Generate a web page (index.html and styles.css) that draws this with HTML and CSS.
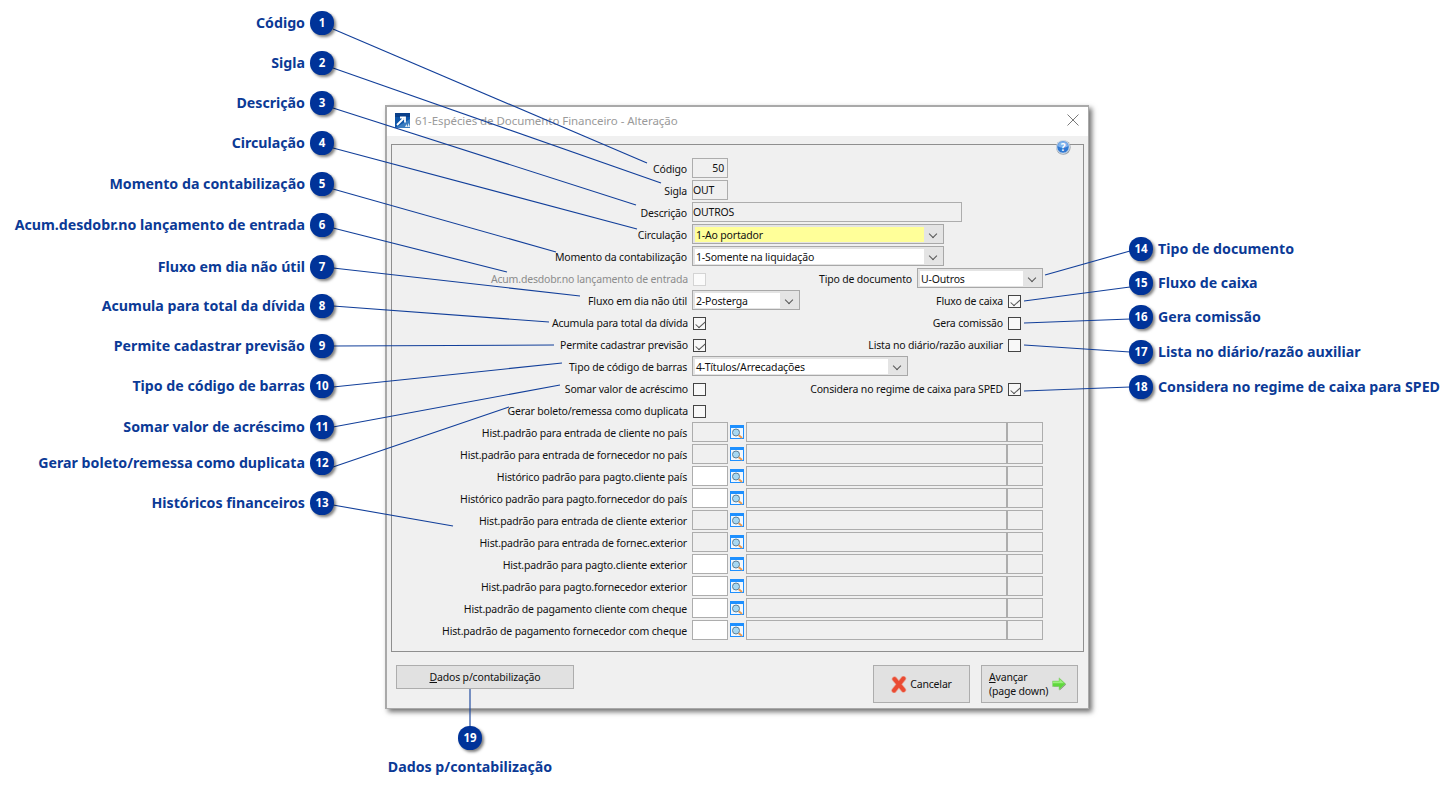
FILE: index.html
```html
<!DOCTYPE html>
<html lang="pt">
<head>
<meta charset="utf-8">
<title>Espécies de Documento Financeiro</title>
<link rel="stylesheet" href="styles.css">
</head>
<body>
<svg width="0" height="0" class="defs">
  <symbol id="lupa" viewBox="0 0 14 14">
    <rect x="0.5" y="0.5" width="13" height="13" fill="#f2f8fd" stroke="#1e90ff"/>
    <rect x="1" y="1" width="12" height="2" fill="#1e90ff"/>
    <circle cx="6" cy="7.500" r="3.500" fill="#a6d8f2" stroke="#5f7f96"/>
    <path d="M8.800 10.300l3.200 2.700" stroke="#ee9a4e" stroke-width="2"/>
  </symbol>
</svg>
<div class="page">
  <main class="dialog">
    <header class="titlebar">
      <svg class="appicon" width="15" height="15" viewBox="0 0 15 15">
        <rect width="15" height="15" fill="#0f55a8"/>
        <rect width="15" height="4" fill="#0a3f8a"/>
        <path d="M0 15L15 6v9z" fill="#3a7cc0"/>
        <path d="M2 12l6.500-6.500M5 4.500h5v5" fill="none" stroke="#fff" stroke-width="1.800"/>
        <path d="M10 14l1.500-3 1 3zM12.500 14l1-4 1.500 4z" fill="#dbe7f4"/>
      </svg>
      <span class="titletext">61-Espécies de Documento Financeiro - Alteração</span>
      <svg class="close" width="12" height="12" viewBox="0 0 12 12"><path d="M.5.500l11 11M11.500.500l-11 11" stroke="#7a7a7a" fill="none"/></svg>
    </header>
    <section class="frame">
      <svg class="help" width="16" height="16" viewBox="0 0 16 16">
        <circle cx="8.300" cy="8.500" r="7.300" fill="#9aa3ad"/>
        <circle cx="8" cy="8" r="6.300" fill="#2f78d2" stroke="#e4ebf3"/>
        <path d="M3 6.500a5 4 0 0 1 10 0a5 2 0 0 1-10 0" fill="#7fb2ec"/>
        <text x="8" y="11.500" class="helpq">?</text>
      </svg>

      <div class="row"><label class="lbl">Código</label><span class="field w-code num">50</span></div>
      <div class="row"><label class="lbl">Sigla</label><span class="field w-sigla">OUT</span></div>
      <div class="row"><label class="lbl">Descrição</label><span class="field w-desc">OUTROS</span></div>
      <div class="row"><label class="lbl">Circulação</label><span class="select w-long"><span class="val yellow">1-Ao portador</span><span class="arrow"></span></span></div>
      <div class="row"><label class="lbl">Momento da contabilização</label><span class="select w-long"><span class="val">1-Somente na liquidação</span><span class="arrow"></span></span></div>
      <div class="row"><label class="lbl muted">Acum.desdobr.no lançamento de entrada</label><span class="check off"></span>
        <div class="right"><label class="rlbl">Tipo de documento</label><span class="select w-tipo"><span class="val">U-Outros</span><span class="arrow"></span></span></div></div>
      <div class="row"><label class="lbl">Fluxo em dia não útil</label><span class="select w-fluxo"><span class="val">2-Posterga</span><span class="arrow"></span></span>
        <div class="right rc"><label class="rlbl">Fluxo de caixa</label><span class="check on"></span></div></div>
      <div class="row"><label class="lbl">Acumula para total da dívida</label><span class="check on"></span>
        <div class="right rc"><label class="rlbl">Gera comissão</label><span class="check"></span></div></div>
      <div class="row"><label class="lbl">Permite cadastrar previsão</label><span class="check on"></span>
        <div class="right rc"><label class="rlbl">Lista no diário/razão auxiliar</label><span class="check"></span></div></div>
      <div class="row"><label class="lbl">Tipo de código de barras</label><span class="select w-barras"><span class="val">4-Títulos/Arrecadações</span><span class="arrow"></span></span></div>
      <div class="row"><label class="lbl">Somar valor de acréscimo</label><span class="check"></span>
        <div class="right rc"><label class="rlbl">Considera no regime de caixa para SPED</label><span class="check on"></span></div></div>
      <div class="row"><label class="lbl">Gerar boleto/remessa como duplicata</label><span class="check"></span></div>

      <div class="row"><label class="lbl">Hist.padrão para entrada de cliente no país</label><span class="field w-hist"></span><svg class="lupa"><use href="#lupa"/></svg><span class="field w-hdesc"></span><span class="field w-hcod"></span></div>
      <div class="row"><label class="lbl">Hist.padrão para entrada de fornecedor no país</label><span class="field w-hist"></span><svg class="lupa"><use href="#lupa"/></svg><span class="field w-hdesc"></span><span class="field w-hcod"></span></div>
      <div class="row"><label class="lbl">Histórico padrão para pagto.cliente país</label><span class="field w-hist white"></span><svg class="lupa"><use href="#lupa"/></svg><span class="field w-hdesc"></span><span class="field w-hcod"></span></div>
      <div class="row"><label class="lbl">Histórico padrão para pagto.fornecedor do país</label><span class="field w-hist white"></span><svg class="lupa"><use href="#lupa"/></svg><span class="field w-hdesc"></span><span class="field w-hcod"></span></div>
      <div class="row"><label class="lbl">Hist.padrão para entrada de cliente exterior</label><span class="field w-hist"></span><svg class="lupa"><use href="#lupa"/></svg><span class="field w-hdesc"></span><span class="field w-hcod"></span></div>
      <div class="row"><label class="lbl">Hist.padrão para entrada de fornec.exterior</label><span class="field w-hist"></span><svg class="lupa"><use href="#lupa"/></svg><span class="field w-hdesc"></span><span class="field w-hcod"></span></div>
      <div class="row"><label class="lbl">Hist.padrão para pagto.cliente exterior</label><span class="field w-hist white"></span><svg class="lupa"><use href="#lupa"/></svg><span class="field w-hdesc"></span><span class="field w-hcod"></span></div>
      <div class="row"><label class="lbl">Hist.padrão para pagto.fornecedor exterior</label><span class="field w-hist white"></span><svg class="lupa"><use href="#lupa"/></svg><span class="field w-hdesc"></span><span class="field w-hcod"></span></div>
      <div class="row"><label class="lbl">Hist.padrão de pagamento cliente com cheque</label><span class="field w-hist white"></span><svg class="lupa"><use href="#lupa"/></svg><span class="field w-hdesc"></span><span class="field w-hcod"></span></div>
      <div class="row"><label class="lbl">Hist.padrão de pagamento fornecedor com cheque</label><span class="field w-hist white"></span><svg class="lupa"><use href="#lupa"/></svg><span class="field w-hdesc"></span><span class="field w-hcod"></span></div>
    </section>
    <footer class="footer">
      <button class="btn btn-dados"><u>D</u>ados p/contabilização</button>
      <button class="btn btn-act btn-cancel">
        <svg width="16" height="17" viewBox="0 0 16 17">
          <path d="M3.500 3l9 11M12.500 2.500l-9.500 12" stroke="#e9a596" stroke-width="5.400" stroke-linecap="round" fill="none"/>
          <path d="M3.500 3l9 11M12.500 2.500l-9.500 12" stroke="#ea4b33" stroke-width="4" stroke-linecap="round" fill="none"/>
        </svg>
        <span>Cancelar</span>
      </button>
      <button class="btn btn-act btn-next">
        <span class="two"><u>A</u>vançar<br>(page down)</span>
        <svg width="15" height="15" viewBox="0 0 15 15">
          <path d="M1.500 5h6V1.500L14 7.500l-6.500 6V10h-6z" fill="#7c8a74"/>
          <path d="M.5 4h6.500V.8l6.500 6-6.500 6V9.500H.5z" fill="#5fd83c" stroke="#9bd08a" stroke-width=".6"/>
          <path d="M1 4.500h6.500V2L12 6.300H1z" fill="#9cf07e"/>
        </svg>
      </button>
    </footer>
  </main>

  <svg class="leaders" width="1456" height="793" viewBox="0 0 1456 793">
    <g stroke="#123f9a" stroke-width="1.100" fill="none">
      <path d="M333 29L647 163"/>
      <path d="M333 68L661 183"/>
      <path d="M333 108L636 205"/>
      <path d="M333 148L637 229"/>
      <path d="M333 189L556 252"/>
      <path d="M333 228L507 272"/>
      <path d="M333 268L580 296"/>
      <path d="M333 306L549 322"/>
      <path d="M333 346L554 345"/>
      <path d="M333 387L562 363"/>
      <path d="M333 427L560 385"/>
      <path d="M333 467L509 407"/>
      <path d="M333 505L453 526"/>
      <path d="M1130 251L1045 275"/>
      <path d="M1130 287L1024 301"/>
      <path d="M1130 319L1024 323"/>
      <path d="M1130 352L1024 345"/>
      <path d="M1130 387L1024 391"/>
      <path d="M470 727V689"/>
    </g>
  </svg>

  <div class="call l y1"><span class="ct">Código</span><span class="pin">1</span></div>
  <div class="call l y2"><span class="ct">Sigla</span><span class="pin">2</span></div>
  <div class="call l y3"><span class="ct">Descrição</span><span class="pin">3</span></div>
  <div class="call l y4"><span class="ct">Circulação</span><span class="pin">4</span></div>
  <div class="call l y5"><span class="ct">Momento da contabilização</span><span class="pin">5</span></div>
  <div class="call l y6"><span class="ct">Acum.desdobr.no lançamento de entrada</span><span class="pin">6</span></div>
  <div class="call l y7"><span class="ct">Fluxo em dia não útil</span><span class="pin">7</span></div>
  <div class="call l y8"><span class="ct">Acumula para total da dívida</span><span class="pin">8</span></div>
  <div class="call l y9"><span class="ct">Permite cadastrar previsão</span><span class="pin">9</span></div>
  <div class="call l y10"><span class="ct">Tipo de código de barras</span><span class="pin">10</span></div>
  <div class="call l y11"><span class="ct">Somar valor de acréscimo</span><span class="pin">11</span></div>
  <div class="call l y12"><span class="ct">Gerar boleto/remessa como duplicata</span><span class="pin">12</span></div>
  <div class="call l y13"><span class="ct">Históricos financeiros</span><span class="pin">13</span></div>
  <div class="call r y14"><span class="pin">14</span><span class="ct">Tipo de documento</span></div>
  <div class="call r y15"><span class="pin">15</span><span class="ct">Fluxo de caixa</span></div>
  <div class="call r y16"><span class="pin">16</span><span class="ct">Gera comissão</span></div>
  <div class="call r y17"><span class="pin">17</span><span class="ct">Lista no diário/razão auxiliar</span></div>
  <div class="call r y18"><span class="pin">18</span><span class="ct">Considera no regime de caixa para SPED</span></div>
  <div class="call b"><span class="pin">19</span><span class="ct">Dados p/contabilização</span></div>
</div>
</body>
</html>
```
FILE: styles.css
```css
* { box-sizing: border-box; }
html, body { margin: 0; padding: 0; background: #fff; }
body { font-family: "Noto Sans", "Open Sans", sans-serif; }
.defs { position: absolute; }
.page { position: relative; width: 1456px; height: 793px; overflow: hidden; background: #fff; }

/* dialog window */
.dialog {
  position: absolute; left: 385px; top: 105px; width: 704px; height: 604px;
  background: #f0f0f0; border: 1px solid #a9a9a9; border-top-width: 2px; border-left-width: 2px;
  box-shadow: 3px 3px 5px rgba(0,0,0,.55);
  padding: 0 4px 0 4px; display: flex; flex-direction: column;
}
.titlebar { height: 29px; margin: 0 -4px; background: #fff; display: flex; align-items: center; padding: 0 9px 3px 8px; flex: none; }
.appicon { flex: none; }
.titletext { margin-left: 5px; font-size: 11.5px; letter-spacing: -.06px; color: #9a9a9a; flex: 1; }
.close { flex: none; }

.frame { position: relative; margin-top: 8px; width: 693px; height: 508px; border: 1px solid #8f8f8f; padding-top: 13px; padding-right: 40px; font-size: 10.5px; letter-spacing: -.17px; color: #111; flex: none; }
.help { position: absolute; right: 12px; top: -6px; }
.helpq { font: bold 10px "Noto Sans", sans-serif; fill: #fff; text-anchor: middle; }

.row { height: 22px; display: flex; align-items: flex-start; }
.lbl { width: 300px; flex: none; text-align: right; padding-right: 5px; line-height: 22px; white-space: nowrap; }
.muted { color: #8c8c8c; }
.right { margin-left: auto; display: flex; align-items: flex-start; }
.rc { padding-right: 22px; }
.rlbl { line-height: 22px; padding-right: 5px; white-space: nowrap; }
.rc .rlbl { padding-right: 4px; }

.field { display: block; height: 20px; border: 1px solid #adadad; line-height: 18px; padding: 0; background: #f0f0f0; flex: none; }
.num { text-align: right; padding-right: 3px; }
.white { background: #fff; }
.w-code { width: 36px; }
.w-sigla { width: 36px; }
.w-desc { width: 270px; }
.w-hist { width: 36px; }
.w-hdesc { width: 261px; }
.w-hcod { width: 36px; }
.lupa { width: 14px; height: 14px; margin: 3px 2px 0 2px; flex: none; }

.select { display: flex; height: 20px; border: 1px solid #a8a8a8; background: #e4e4e4; padding: 2px; flex: none; }
.val { flex: 1; background: #fff; line-height: 17px; height: 15px; padding-left: 1px; white-space: nowrap; overflow: hidden; }
.yellow { background: #ffff99; }
.arrow { width: 17px; position: relative; flex: none; }
.arrow::after { content: ""; position: absolute; left: 6px; top: 4px; width: 5px; height: 5px; border-right: 1px solid #555; border-bottom: 1px solid #555; transform: rotate(45deg); }
.w-long { width: 252px; }
.w-tipo { width: 126px; }
.w-fluxo { width: 108px; }
.w-barras { width: 216px; }

.check { display: block; width: 13px; height: 13px; margin: 5px 0 0 1px; border: 1px solid #444; background: #f8f8f8; position: relative; flex: none; }
.lbl:has(+ .check) { padding-right: 4px; }
.check.off { border-color: #d4d4d4; background: #fbfbfb; }
.check.on::after { content: ""; position: absolute; left: 3.500px; top: .5px; width: 4px; height: 8px; border-right: 1px solid #555; border-bottom: 1px solid #555; transform: rotate(42deg) skewX(-6deg); }

/* footer */
.footer { flex: 1; display: flex; align-items: flex-start; padding: 13px 6px 0 5px; }
.btn { font: 10.5px "Noto Sans", sans-serif; letter-spacing: -.17px; color: #111; background: #e1e1e1; border: 1px solid #adadad; padding: 0; }
.btn-dados { width: 178px; height: 24px; }
.btn-act { width: 97px; height: 38px; display: flex; align-items: center; }
.btn-cancel { margin-left: auto; justify-content: center; gap: 3px; }
.btn-next { margin-left: 11px; text-align: left; padding-left: 7px; gap: 4px; line-height: 14px; }

/* callouts */
.leaders { position: absolute; left: 0; top: 0; pointer-events: none; }
.call { position: absolute; display: flex; align-items: center; gap: 5px; color: #0b3a96; font-weight: 700; font-size: 14.2px; white-space: nowrap; height: 24px; }
.ct { position: relative; top: -1px; }
.l { right: 1122px; }
.r { left: 1129px; }
.pin { width: 24px; height: 24px; border-radius: 48%; background: #003399; color: #fff; font-size: 11.5px; line-height: 24px; text-align: center; box-shadow: 2px 2px 3px rgba(0,0,0,.5); flex: none; }
.b { left: 370px; width: 200px; top: 726px; height: auto; flex-direction: column; gap: 8px; }
.y1 { top: 11px; } .y2 { top: 51px; } .y3 { top: 91px; } .y4 { top: 131px; } .y5 { top: 172px; }
.y6 { top: 213px; } .y7 { top: 255px; } .y8 { top: 294px; } .y9 { top: 334px; } .y10 { top: 374px; }
.y11 { top: 415px; } .y12 { top: 451px; } .y13 { top: 491px; }
.y14 { top: 237px; } .y15 { top: 271px; } .y16 { top: 305px; } .y17 { top: 340px; } .y18 { top: 375px; }
```
